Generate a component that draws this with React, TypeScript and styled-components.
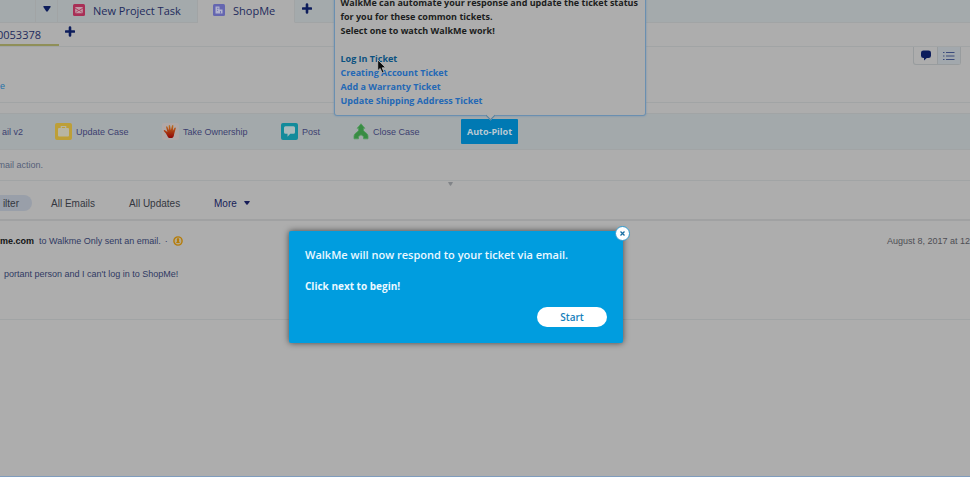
import React from "react";
import styled, { createGlobalStyle } from "styled-components";

const sans = '"Liberation Sans", Arial, sans-serif';
const open = '"Open Sans", "Noto Sans", sans-serif';
const line = "#a1a4a5";
const navy = "#0d1d5c";

const Global = createGlobalStyle`
  * { box-sizing: border-box; }
  html, body { margin: 0; height: 100%; overflow: hidden; }
  #root { height: 100%; }
  button { margin: 0; padding: 0; border: 0; background: none; font: inherit; color: inherit; cursor: pointer; }
  a { color: inherit; text-decoration: none; }
  p { margin: 0; }
`;

const Page = styled.div`
  position: relative;
  display: flex;
  flex-direction: column;
  min-height: 100vh;
  overflow: hidden;
  background: #adadad;
  border-bottom: 1px solid #7f9cbd;
  font-family: ${sans};
  font-size: 9px;
  color: #303a63;
`;

const TabBar = styled.nav`
  display: flex;
  height: 23px;
  background: #a4aaac;
`;

const Tab = styled.button<{ $width: number; $active?: boolean }>`
  display: flex;
  align-items: center;
  gap: 8px;
  width: ${(p) => p.$width}px;
  padding: 0 0 2px 15px;
  border-right: 1px solid ${line};
  border-bottom: 1px solid ${(p) => (p.$active ? "#adadad" : line)};
  background: ${(p) => (p.$active ? "#adadad" : "transparent")};
  font: 11px ${open};
  color: #1e2a5c;
  white-space: nowrap;
`;

const TabStub = styled.button<{ $width: number }>`
  display: flex;
  align-items: center;
  justify-content: center;
  width: ${(p) => p.$width}px;
  padding-bottom: 5px;
  border-right: 1px solid ${line};
  border-bottom: 1px solid ${line};
  color: ${navy};
`;

const TabRest = styled.div`
  flex: 1;
  padding-left: 7px;
  border-bottom: 1px solid ${line};
`;

const IconButton = styled.button`
  display: block;
  height: 17px;
  color: ${navy};
`;

const SubTabs = styled.nav`
  display: flex;
  gap: 6px;
  height: 24px;
  border-bottom: 1px solid ${line};
`;

const SubTab = styled.button`
  display: flex;
  justify-content: flex-end;
  width: 59px;
  padding-right: 18px;
  overflow: hidden;
  border-bottom: 2px solid #8f8f58;
  font: 11px/24px ${open};
  color: #1e2a5c;
`;

const RecordHeader = styled.header`
  display: flex;
  justify-content: space-between;
  height: 56px;
  padding-right: 9px;
  border-bottom: 1px solid ${line};
`;

const CutLink = styled.a`
  margin-top: 32px;
  line-height: 14px;
  color: #1f70a8;
`;

const ViewSwitch = styled.div`
  display: flex;
  height: 18px;
  border: 1px solid #989c9e;
  border-top: 0;
  border-radius: 0 0 3px 3px;
`;

const ViewButton = styled.button<{ $on?: boolean }>`
  display: flex;
  align-items: center;
  justify-content: center;
  width: 23px;
  background: ${(p) => (p.$on ? "#a2a8ad" : "transparent")};
  border-left: ${(p) => (p.$on ? "1px solid #989c9e" : "0")};
  color: ${(p) => (p.$on ? "#3b4b7c" : navy)};
`;

const Actions = styled.div`
  display: flex;
  align-items: center;
  height: 37px;
  margin-top: 10px;
  border-top: 1px solid ${line};
  border-bottom: 1px solid ${line};
  background: #a3a9ab;
`;

const Action = styled.button<{ $width: number }>`
  display: flex;
  flex: none;
  align-items: center;
  gap: 4px;
  width: ${(p) => p.$width}px;
  font: 9px ${sans};
  color: #3c4070;
  white-space: nowrap;
`;

const CutAction = styled(Action)`
  justify-content: flex-end;
  padding-right: 32px;
  overflow: hidden;
`;

const PilotSlot = styled.div`
  position: relative;
`;

const PilotButton = styled.button`
  display: block;
  width: 57px;
  height: 25px;
  border-radius: 1px;
  background: #0079b3;
  font: 700 9px ${open};
  color: #b8c9d4;
  white-space: nowrap;
`;

const Callout = styled.div`
  position: absolute;
  bottom: 28px;
  left: 50%;
  width: 312px;
  padding: 7px 6px;
  transform: translateX(-50%);
  border: 1px solid #6a8fb0;
  border-radius: 3px;
  background: #adadad;
  box-shadow: 0 0 2px #6a8fb0;
  font: 700 9px/14px ${open};
  color: #1c1d20;
  white-space: nowrap;

  &::after {
    content: "";
    position: absolute;
    bottom: -4px;
    left: 50%;
    width: 6px;
    height: 6px;
    margin-left: -3px;
    transform: rotate(45deg);
    border: solid #52809f;
    border-width: 0 1px 1px 0;
    background: #adadad;
  }
`;

const TicketList = styled.ul`
  margin: 14px 0 0;
  padding: 0;
  list-style: none;
`;

const TicketLink = styled.a<{ $hover?: boolean }>`
  color: ${(p) => (p.$hover ? "#0b5180" : "#2468b5")};
`;

const Pointer = styled.svg`
  position: absolute;
  left: 42px;
  bottom: 41px;
`;

const Hint = styled.div`
  height: 31px;
  border-bottom: 1px solid ${line};
  color: #555f79;
`;

const HintText = styled.div`
  display: flex;
  justify-content: flex-end;
  width: 43px;
  line-height: 30px;
  white-space: nowrap;
`;

const Grip = styled.div`
  display: flex;
  height: 6px;
  padding: 1px 0 0 448px;
  color: #818488;
`;

const Filters = styled.div`
  display: flex;
  align-items: flex-start;
  height: 34px;
  padding-top: 8px;
  border-bottom: 2px solid #a0a1a2;
  font-size: 10px;
`;

const Filter = styled.button<{ $width: number; $cut?: boolean; $strong?: boolean }>`
  display: flex;
  flex: none;
  align-items: center;
  gap: 7px;
  justify-content: ${(p) => (p.$cut ? "flex-end" : "flex-start")};
  width: ${(p) => p.$width}px;
  height: 16px;
  padding-right: ${(p) => (p.$cut ? 13 : 0)}px;
  margin-right: ${(p) => (p.$cut ? 19 : 0)}px;
  border-radius: 0 8px 8px 0;
  background: ${(p) => (p.$cut ? "#999fa9" : "transparent")};
  color: ${(p) => (p.$strong ? "#161c58" : "#34373f")};
  white-space: nowrap;
`;

const FeedItem = styled.article`
  height: 99px;
  padding-top: 13px;
  border-bottom: 1px solid ${line};
`;

const FeedHead = styled.div`
  display: flex;
  align-items: center;
  height: 14px;
  white-space: nowrap;
`;

const Sender = styled.b`
  width: 32px;
  margin-right: 7px;
  color: #111214;
`;

const Dot = styled.span`
  margin: 0 5px 0 4px;
`;

const Time = styled.time`
  margin-left: auto;
  color: #4d4e54;
`;

const FeedBody = styled.p`
  margin-top: 19px;
  padding-left: 4px;
  line-height: 14px;
  white-space: nowrap;
`;

const Overlay = styled.div`
  position: absolute;
  top: 231px;
  left: 289px;
`;

const Dialog = styled.section`
  position: relative;
  display: flex;
  flex-direction: column;
  width: 334px;
  padding: 16px;
  border-radius: 2px;
  background: #009ddf;
  box-shadow: 0 0 6px rgba(0, 0, 0, 0.6);
  font: 600 11px/16px ${open};
  color: #eaf8ff;
  white-space: nowrap;
`;

const DialogText = styled.p<{ $small?: boolean }>`
  margin-bottom: 15px;
  font-size: ${(p) => (p.$small ? 10 : 11)}px;
  font-weight: ${(p) => (p.$small ? 700 : 600)};
`;

const Start = styled.button`
  align-self: flex-end;
  width: 70px;
  height: 20px;
  margin-top: -2px;
  border-radius: 10px;
  background: #fff;
  font: 600 10px ${open};
  color: #1580bb;
`;

const Close = styled.button`
  position: absolute;
  top: -5px;
  right: -7px;
  display: flex;
  align-items: center;
  justify-content: center;
  width: 15px;
  height: 15px;
  border: 1px solid #2e9bd0;
  border-radius: 50%;
  background: #fff;
`;

const Plus = () => (
  <svg width="10" height="17" viewBox="0 0 10 17" aria-hidden="true">
    <path d="M5 4.500v8M1 8.500h8" stroke="currentColor" strokeWidth="2.600" strokeLinecap="round" />
  </svg>
);

const Caret = ({ w, h }: { w: number; h: number }) => (
  <svg width={w} height={h} viewBox="0 0 8 6" preserveAspectRatio="none" aria-hidden="true">
    <path d="M1 0h6q1 0 .6 1L4.800 5.200q-.8.900-1.600 0L.4 1Q0 0 1 0z" fill="currentColor" />
  </svg>
);

const TaskIcon = () => (
  <svg width="12" height="12" viewBox="0 0 12 12" aria-hidden="true">
    <rect width="12" height="12" rx="1.500" fill="#a92f56" />
    <rect x="2.200" y="3" width="7.600" height="6.200" rx=".6" fill="#c29aa6" />
    <path d="M2.200 4.200L6 6.600l3.800-2.400M3 8.600l2-2M9 8.600l-2-2" stroke="#a92f56" strokeWidth=".9" fill="none" />
  </svg>
);

const AccountIcon = () => (
  <svg width="12" height="12" viewBox="0 0 12 12" aria-hidden="true">
    <rect width="12" height="12" rx="1.500" fill="#6566b0" />
    <path d="M2.500 2.500h4v3h3v4h-7z" fill="#b2b3cd" />
    <path d="M4 4.300h1.500M4 6.300h1M7.500 7v2.500" stroke="#6566b0" strokeWidth=".8" />
  </svg>
);

const CaseIcon = () => (
  <svg width="17" height="17" viewBox="0 0 17 17" aria-hidden="true">
    <rect width="17" height="17" rx="2" fill="#bd9f38" />
    <path d="M6.300 5V3.500h4.400V5" fill="none" stroke="#b8b5a2" strokeWidth="1.200" />
    <rect x="3" y="5" width="11" height="8.500" rx="1" fill="#b8b5a2" />
  </svg>
);

const HandIcon = () => (
  <svg width="17" height="17" viewBox="0 0 17 17" aria-hidden="true">
    <defs>
      <linearGradient id="palm" x1="0" y1="0" x2="0" y2="1">
        <stop offset="0" stopColor="#bd7421" />
        <stop offset=".45" stopColor="#ae3f12" />
        <stop offset="1" stopColor="#8e0505" />
      </linearGradient>
    </defs>
    <rect width="17" height="17" rx="2" fill="#b0a9a9" />
    <path
      d="M6.200 14.500Q5 12 3.800 10.200L1.800 8Q1.600 6.600 3 7.200L5.400 9 4.100 4.200q0-1.300 1.200-.7L6.900 7.400 6.700 2.600q.6-1.200 1.400 0L8.800 7.200 10 2.400q.8-1 1.400.1L10.900 7.700 12.600 4.700q.9-.8 1.300.4L12.400 10q-.4 3-1.400 4.500-2.400 1.200-4.800 0z"
      fill="url(#palm)"
    />
  </svg>
);

const PostIcon = () => (
  <svg width="17" height="17" viewBox="0 0 17 17" aria-hidden="true">
    <rect width="17" height="17" rx="2" fill="#138b9b" />
    <path d="M4.500 3.200h8q1.500 0 1.500 1.500v4.600q0 1.500-1.500 1.500H9.300L6.500 13.800v-3h-2Q3 10.800 3 9.300V4.700q0-1.500 1.500-1.500z" fill="#a9babc" />
  </svg>
);

const MergeIcon = () => (
  <svg width="16" height="17" viewBox="0 0 16 17" aria-hidden="true">
    <path
      d="M8 .8l3.800 4.500H10.500v2.500l3.500 3q1 1 1 2.500v2.500h-4.500v-2.300L8 11.800l-2.500 1.700v2.300H1v-2.500Q1 11.800 2 10.800l3.500-3V5.300H4.200z"
      fill="#398c44"
      stroke="#4f9c5a"
      strokeWidth=".8"
    />
  </svg>
);

const ChatIcon = () => (
  <svg width="12" height="11" viewBox="0 0 12 11" aria-hidden="true">
    <path d="M3.500.5h5Q11 .5 11 2.800v2.900Q11 8 8.500 8H6.800L4 10.500V8h-.5Q1 8 1 5.700V2.800Q1 .5 3.500.5z" fill="currentColor" />
  </svg>
);

const ListIcon = () => (
  <svg width="12" height="10" viewBox="0 0 12 10" aria-hidden="true">
    <path d="M0 1.500h1.500M0 5h1.500M0 8.500h1.500M3 1.500h8.500M3 5h8.500M3 8.500h8.500" stroke="currentColor" strokeWidth="1.200" />
  </svg>
);

const PublicIcon = () => (
  <svg width="10" height="10" viewBox="0 0 10 10" aria-hidden="true">
    <circle cx="5" cy="5" r="4.100" fill="#b4aa90" stroke="#b57b08" strokeWidth="1.400" />
    <path d="M5 2q1.200 0 1.200 1.500 0 1-.4 1.500L7 7H3l1.200-2q-.4-.5-.4-1.500Q3.800 2 5 2z" fill="#b57b08" />
  </svg>
);

export default function App() {
  return (
    <>
      <Global />
      <Page>
        <TabBar aria-label="Workspace tabs">
          <TabStub $width={36} aria-label="Previous tab" />
          <TabStub $width={22} aria-label="Tab menu"><Caret w={8} h={6} /></TabStub>
          <Tab $width={140}><TaskIcon />New Project Task</Tab>
          <Tab $width={97} $active><AccountIcon />ShopMe</Tab>
          <TabRest><IconButton aria-label="New tab"><Plus /></IconButton></TabRest>
        </TabBar>

        <SubTabs aria-label="Case tabs">
          <SubTab>0053378</SubTab>
          <IconButton aria-label="New case tab"><Plus /></IconButton>
        </SubTabs>

        <RecordHeader>
          <CutLink href="#">e</CutLink>
          <ViewSwitch>
            <ViewButton aria-label="Feed"><ChatIcon /></ViewButton>
            <ViewButton $on aria-label="Details"><ListIcon /></ViewButton>
          </ViewSwitch>
        </RecordHeader>

        <Actions>
          <CutAction $width={55}>ail v2</CutAction>
          <Action $width={107}><CaseIcon />Update Case</Action>
          <Action $width={119}><HandIcon />Take Ownership</Action>
          <Action $width={72}><PostIcon />Post</Action>
          <Action $width={108}><MergeIcon />Close Case</Action>
          <PilotSlot>
            <PilotButton>Auto-Pilot</PilotButton>
            <Callout>
              <p>WalkMe can automate your response and update the ticket status</p>
              <p>for you for these common tickets.</p>
              <p>Select one to watch WalkMe work!</p>
              <TicketList>
                <li><TicketLink href="#" $hover>Log In Ticket</TicketLink></li>
                <li><TicketLink href="#">Creating Account Ticket</TicketLink></li>
                <li><TicketLink href="#">Add a Warranty Ticket</TicketLink></li>
                <li><TicketLink href="#">Update Shipping Address Ticket</TicketLink></li>
              </TicketList>
              <Pointer width="10" height="15" viewBox="0 0 10 15" aria-hidden="true">
                <path d="M.7.800v11l2.500-2.300 1.900 4.500 2-.9-1.900-4.300h3.600z" fill="#0c0c0c" stroke="#b8b8b8" strokeWidth=".9" />
              </Pointer>
            </Callout>
          </PilotSlot>
        </Actions>

        <Hint><HintText>mail action.</HintText></Hint>
        <Grip><Caret w={5} h={4} /></Grip>

        <Filters>
          <Filter $width={32} $cut>ilter</Filter>
          <Filter $width={78}>All Emails</Filter>
          <Filter $width={85}>All Updates</Filter>
          <Filter $width={40} $strong>More<Caret w={6} h={4} /></Filter>
        </Filters>

        <FeedItem>
          <FeedHead>
            <Sender>me.com</Sender>
            to Walkme Only sent an email.
            <Dot>·</Dot>
            <PublicIcon />
            <Time>August 8, 2017 at 12</Time>
          </FeedHead>
          <FeedBody>portant person and I can't log in to ShopMe!</FeedBody>
        </FeedItem>

        <Overlay>
          <Dialog role="dialog" aria-label="WalkMe">
            <DialogText>WalkMe will now respond to your ticket via email.</DialogText>
            <DialogText $small>Click next to begin!</DialogText>
            <Start>Start</Start>
            <Close aria-label="Close">
              <svg width="5" height="5" viewBox="0 0 5 5" aria-hidden="true">
                <path d="M.5.500l4 4M4.500.500l-4 4" stroke="#1a6fa3" strokeWidth="1.300" />
              </svg>
            </Close>
          </Dialog>
        </Overlay>
      </Page>
    </>
  );
}
